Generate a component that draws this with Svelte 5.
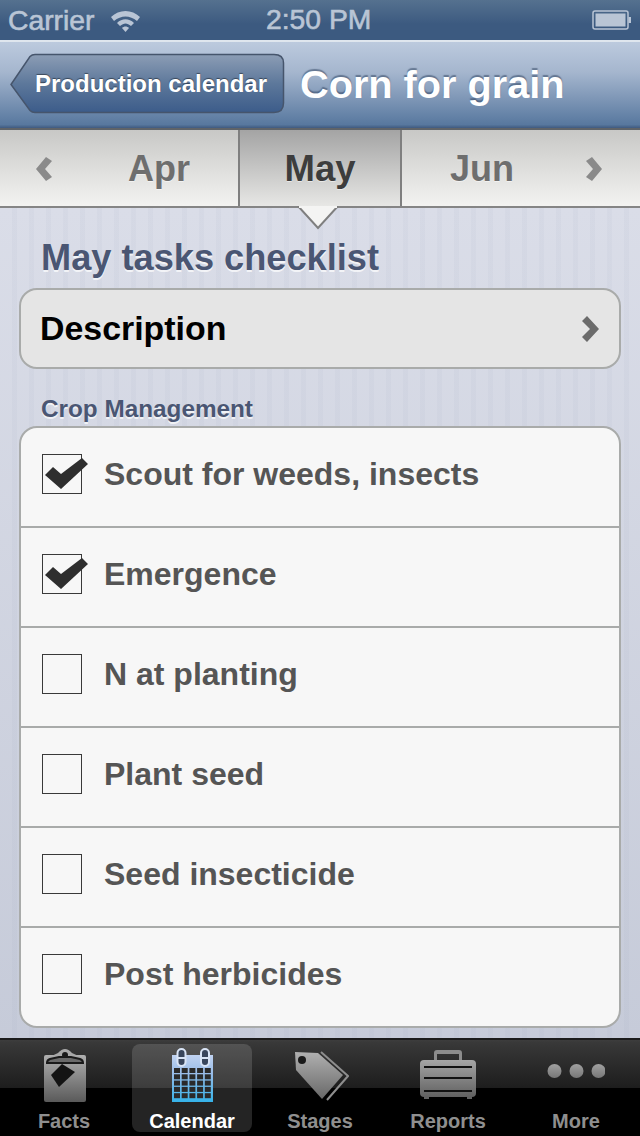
<script>
  const rows = [
    { label: 'Scout for weeds, insects', done: true },
    { label: 'Emergence', done: true },
    { label: 'N at planting', done: false },
    { label: 'Plant seed', done: false },
    { label: 'Seed insecticide', done: false },
    { label: 'Post herbicides', done: false }
  ];
  const idx = [0, 1, 2, 3, 4];
</script>

<div class="screen">
  <header class="status">
    <span class="carrier">Carrier</span>
    <svg class="wifi" width="31" height="23" viewBox="0 0 31 23">
      <path d="M1 8C9 0 22 0 30 8L27 12C20 6 11 6 4 12Z" fill="#b9c5d5"/>
      <path d="M7 14C12 9 19 9 24 14L21 17C17 13.500 14 13.500 10 17Z" fill="#b9c5d5"/>
      <path d="M12 19C14 17 17 17 19 19L15.500 23Z" fill="#b9c5d5"/>
    </svg>
    <span class="time">2:50 PM</span>
    <svg class="battery" width="40" height="22" viewBox="0 0 40 22">
      <rect x="1" y="2" width="35" height="18" rx="2" fill="none" stroke="#b9c5d5" stroke-width="1.500"/>
      <rect x="3.500" y="4.500" width="30" height="13" fill="#b9c5d5"/>
      <rect x="36.500" y="8" width="2.500" height="6" fill="#b9c5d5"/>
    </svg>
  </header>

  <nav class="navbar">
    <button class="back">
      <svg class="back-shape" width="275" height="62" viewBox="0 0 275 62">
        <defs>
          <linearGradient id="backFill" x1="0" y1="0" x2="0" y2="1">
            <stop offset="0" stop-color="#8c9db5"/>
            <stop offset="0.5" stop-color="#5d789b"/>
            <stop offset="1" stop-color="#3c5c8a"/>
          </linearGradient>
        </defs>
        <path d="M1 31.500L20 3.500Q22 1.500 25 1.500H264Q273.500 1.500 273.500 10V50Q273.500 59.500 264 59.500H25Q22 59.500 20 57.500Z" fill="url(#backFill)" stroke="#46556c" stroke-width="1.500"/>
      </svg>
      <span class="back-label">Production calendar</span>
    </button>
    <h1>Corn for grain</h1>
  </nav>

  <div class="months">
    <div class="month side">
      <svg class="chev" width="16" height="24" viewBox="0 0 16 24"><path d="M10 0L16 4L9 12L16 20L10 24L0 12Z" fill="#8a8a8a"/></svg>
      <span class="apr">Apr</span>
    </div>
    <div class="month current">
      May
      <svg class="pointer" width="44" height="24" viewBox="0 0 44 24">
        <path d="M2 0L22 22L42 0Z" fill="#f4f4f3"/>
        <path d="M2 0L22 22L42 0" fill="none" stroke="#7f7f7f" stroke-width="2"/>
        <path d="M3 1H41" stroke="#f4f4f3" stroke-width="2"/>
      </svg>
    </div>
    <div class="month side">
      <span class="jun">Jun</span>
      <svg class="chev" width="16" height="24" viewBox="0 0 16 24"><path d="M6 0L0 4L7 12L0 20L6 24L16 12Z" fill="#8a8a8a"/></svg>
    </div>
  </div>

  <main class="content">
    <h2>May tasks checklist</h2>
    <div class="description">
      <span>Description</span>
      <svg width="17" height="26" viewBox="0 0 17 26"><path d="M5 0L0 5L8 13L0 21L5 26L17 13Z" fill="#6b6b6b"/></svg>
    </div>
    <h3>Crop Management</h3>
    <ul class="list">
      {#each rows as row}
        <li>
          <span class="box">
            {#if row.done}
              <svg class="tick" width="44" height="32" viewBox="0 0 44 32">
                <path d="M0 17L8 9L16 16L37 0L43 6L16 31Z" fill="#2e2e2e"/>
              </svg>
            {/if}
          </span>
          <span class="task">{row.label}</span>
        </li>
      {/each}
    </ul>
  </main>

  <footer class="tabbar">
    <div class="tab">
      <svg width="44" height="56" viewBox="0 0 44 56">
        <defs>
          <linearGradient id="g1" x1="0" y1="0" x2="0" y2="1">
            <stop offset="0" stop-color="#b0b0b0"/>
            <stop offset="1" stop-color="#5a5a5a"/>
          </linearGradient>
        </defs>
        <rect x="2" y="9" width="42" height="47" rx="2" fill="url(#g1)"/>
        <path d="M3 13L16 7Q23 -1 30 7L43 13V18H3Z" fill="#a8a8a8"/>
        <path d="M5 17Q5 14 8 13L17 11H29L38 13Q41 14 41 17Z" fill="#6a6a6a" stroke="#1a1a1a" stroke-width="2"/>
        <circle cx="23" cy="9" r="3" fill="#1a1a1a"/>
        <path d="M20 18L33 26L17 41L9 29Z" fill="#141414"/>
      </svg>
      <span>Facts</span>
    </div>
    <div class="tab active">
      <svg width="44" height="56" viewBox="0 0 44 56">
        <defs>
          <linearGradient id="g2" x1="0" y1="0" x2="0" y2="1">
            <stop offset="0" stop-color="#c0d2f0"/>
            <stop offset="0.4" stop-color="#98bce8"/>
            <stop offset="1" stop-color="#35b2e8"/>
          </linearGradient>
        </defs>
        <rect x="2" y="9" width="41" height="47" fill="url(#g2)"/>
        <g fill="#2a2a2a">
          {#each idx as r}
            {#each idx as c}
              <rect x={4 + c * 7.7} y={22 + r * 6.3} width="6" height="5"/>
            {/each}
          {/each}
        </g>
        <rect x="7.500" y="3" width="8" height="17" rx="4" fill="#39465c" stroke="#d9e4f5" stroke-width="2"/>
        <rect x="31" y="3" width="8" height="17" rx="4" fill="#39465c" stroke="#d9e4f5" stroke-width="2"/>
        <path d="M8 12H15M31.500 12H38.500" stroke="#d9e4f5" stroke-width="2"/>
      </svg>
      <span>Calendar</span>
    </div>
    <div class="tab">
      <svg width="58" height="56" viewBox="0 0 58 56">
        <defs>
          <linearGradient id="g3" x1="0" y1="0" x2="0" y2="1">
            <stop offset="0" stop-color="#b0b0b0"/>
            <stop offset="1" stop-color="#686868"/>
          </linearGradient>
        </defs>
        <path d="M4 6L27 7L52 29L31 53L5 24Z" fill="url(#g3)"/>
        <circle cx="11" cy="14" r="4" fill="#1a1a1a"/>
        <path d="M30 6L57 30L36 54" fill="none" stroke="#8d8d8d" stroke-width="2"/>
      </svg>
      <span>Stages</span>
    </div>
    <div class="tab">
      <svg width="58" height="56" viewBox="0 0 58 56">
        <defs>
          <linearGradient id="g4" x1="0" y1="0" x2="0" y2="1">
            <stop offset="0" stop-color="#a5a5a5"/>
            <stop offset="1" stop-color="#616161"/>
          </linearGradient>
        </defs>
        <path d="M15 14V7Q15 4 18 4H40Q43 4 43 7V14H40V8H18V14Z" fill="#8c8c8c"/>
        <rect x="1" y="14" width="56" height="37" rx="4" fill="url(#g4)"/>
        <path d="M5 51H10V53H5ZM48 51H53V53H48Z" fill="#616161"/>
        <path d="M5 21H53M5 32H53M5 45H53" stroke="#111" stroke-width="2"/>
      </svg>
      <span>Reports</span>
    </div>
    <div class="tab">
      <svg width="58" height="56" viewBox="0 0 58 56">
        <defs>
          <linearGradient id="g5" x1="0" y1="0" x2="0" y2="1">
            <stop offset="0" stop-color="#a0a0a0"/>
            <stop offset="1" stop-color="#777"/>
          </linearGradient>
        </defs>
        <circle cx="7.500" cy="25" r="7" fill="url(#g5)"/>
        <circle cx="29.500" cy="25" r="7" fill="url(#g5)"/>
        <circle cx="51.500" cy="25" r="7" fill="url(#g5)"/>
      </svg>
      <span>More</span>
    </div>
  </footer>
</div>

<style>
  :global(body) { margin: 0; }
  .screen {
    width: 640px;
    height: 1136px;
    display: flex;
    flex-direction: column;
    overflow: hidden;
    font-family: "Liberation Sans", Arial, sans-serif;
    font-weight: 700;
  }
  .status {
    height: 40px;
    flex: none;
    box-sizing: border-box;
    padding: 0 8px;
    display: flex;
    align-items: center;
    position: relative;
    background: linear-gradient(#55718f, #3c5a80 60%);
    color: #b9c5d5;
    font-size: 28.300px;
    font-weight: 400;
    -webkit-text-stroke: 0.6px #b9c5d5;
  }
  .wifi { margin-left: 16px; }
  .time { position: absolute; left: 266px; top: 3px; line-height: 32px; }
  .battery { margin-left: auto; }
  .carrier { line-height: 40px; }
  .navbar {
    height: 90px;
    flex: none;
    box-sizing: border-box;
    padding-left: 10px;
    display: flex;
    align-items: center;
    border-top: 2px solid #dfe6ee;
    border-bottom: 2px solid #5f6368;
    background: linear-gradient(#bccade, #a5b6ce 35%, #58789f 96%, #3f5a80);
  }
  .back {
    position: relative;
    width: 275px;
    height: 62px;
    margin-top: -2px;
    padding: 0 0 0 25px;
    border: 0;
    background: none;
    font: inherit;
    text-align: left;
    flex: none;
  }
  .back-shape { position: absolute; left: 0; top: 0; }
  .back-label {
    position: relative;
    color: #fff;
    font-size: 24px;
    text-shadow: 0 -1px 1px rgba(0, 0, 0, .45);
  }
  h1 {
    margin: -2px 0 0 15px;
    color: #fff;
    font-size: 39.700px;
    line-height: 48px;
    text-shadow: 0 -2px 1px rgba(40, 60, 90, .5);
  }
  .months {
    height: 78px;
    flex: none;
    box-sizing: border-box;
    display: grid;
    grid-template-columns: 238px 164px 238px;
    border-bottom: 2px solid #858585;
    background: linear-gradient(#c8c8c6, #f3f3f1);
    font-size: 36px;
    position: relative;
    z-index: 1;
  }
  .month {
    display: flex;
    align-items: center;
    padding-top: 2px;
    box-sizing: border-box;
    color: #6e6e6e;
    text-shadow: 0 1px 0 rgba(255, 255, 255, .5);
  }
  .current {
    position: relative;
    justify-content: center;
    color: #3d3d3d;
    font-size: 36.500px;
    border-left: 2px solid #7f7f7f;
    border-right: 2px solid #7f7f7f;
    background: linear-gradient(#a4a4a4, #e7e7e5);
  }
  .pointer { position: absolute; left: 56px; bottom: -24px; }
  .side:first-child { padding-left: 36px; }
  .side:last-child { padding-right: 38px; }
  .apr { margin-left: 76px; }
  .jun { margin-left: 48px; }
  .side:last-child .chev { margin-left: auto; }
  .content {
    flex: 1;
    box-sizing: border-box;
    padding: 0 19px;
    background:
      repeating-linear-gradient(90deg, rgba(150, 160, 185, 0) 0 12px, rgba(150, 160, 185, .07) 12px 17px),
      linear-gradient(#dadde8, #c6cbd9);
  }
  h2 {
    margin: 28px 0 0 22px;
    color: #4a5673;
    font-size: 36.200px;
    line-height: 44px;
    text-shadow: 0 2px 0 rgba(255, 255, 255, .7);
  }
  .description {
    margin-top: 8px;
    height: 81px;
    box-sizing: border-box;
    padding: 0 20px 0 19px;
    display: flex;
    align-items: center;
    justify-content: space-between;
    border: 2px solid #a9abaa;
    border-radius: 18px;
    background: #e5e5e5;
    color: #000;
    font-size: 33.900px;
  }
  h3 {
    margin: 26px 0 0 22px;
    color: #4a5673;
    font-size: 24.300px;
    line-height: 28px;
    text-shadow: 0 2px 0 rgba(255, 255, 255, .7);
  }
  .list {
    list-style: none;
    margin: 3px 0 0;
    padding: 0;
    border: 2px solid #a9abaa;
    border-radius: 18px;
    background: #f7f7f7;
    overflow: hidden;
  }
  li {
    height: 100px;
    box-sizing: border-box;
    padding: 26px 0 0 21px;
    display: flex;
    align-items: flex-start;
    border-top: 2px solid #a9abaa;
    color: #555;
    font-size: 32px;
  }
  li:first-child { border-top: 0; height: 98px; }
  .box {
    position: relative;
    width: 40px;
    height: 40px;
    box-sizing: border-box;
    border: 1px solid #3a3a3a;
    flex: none;
    background: #f7f7f7;
  }
  .tick { position: absolute; left: 2px; top: 3px; }
  .task { margin-left: 22px; line-height: 40px; }
  .tabbar {
    height: 98px;
    flex: none;
    box-sizing: border-box;
    display: grid;
    grid-template-columns: repeat(5, 128px);
    border-top: 2px solid #1c1c1c;
    background: linear-gradient(#3d3d3d, #383838 3px, #1d1d1d 48px, #000 48px);
  }
  .tab {
    box-sizing: border-box;
    height: 88px;
    margin: 4px 4px 4px;
    padding-top: 2px;
    display: flex;
    flex-direction: column;
    align-items: center;
    color: #8f8f8f;
    font-size: 20px;
    line-height: 24px;
    border-radius: 8px;
  }
  .tab svg { display: block; flex: none; }
  .tab span { margin-top: 7px; }
  .active { background: rgba(255, 255, 255, .14); color: #fff; }
</style>
